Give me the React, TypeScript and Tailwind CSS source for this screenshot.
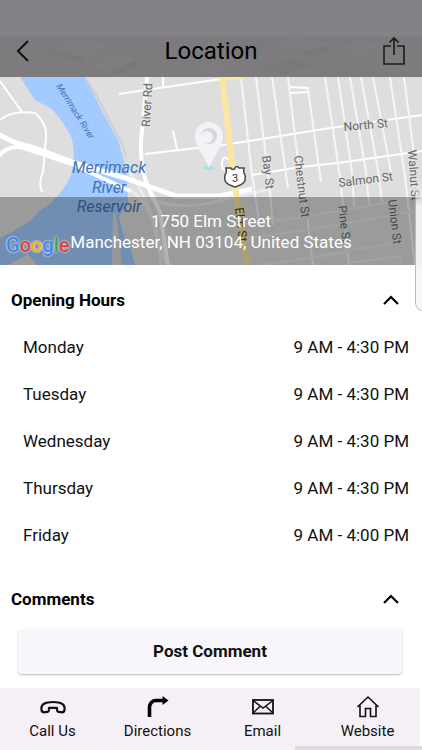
import React from 'react';

const hours = [
  { day: 'Monday', time: '9 AM - 4:30 PM' },
  { day: 'Tuesday', time: '9 AM - 4:30 PM' },
  { day: 'Wednesday', time: '9 AM - 4:30 PM' },
  { day: 'Thursday', time: '9 AM - 4:30 PM' },
  { day: 'Friday', time: '9 AM - 4:00 PM' },
];

function PhoneIcon() {
  return (
    <svg width="28" height="24" viewBox="0 0 28 24" fill="none" stroke="#111" strokeWidth="2.200" strokeLinejoin="round" aria-hidden="true">
      <path d="M2.500 15C1.500 9 6.500 7 14 7s12.500 2 11.500 8c-.3 2-1.500 2.500-3.500 2.200l-2.500-.4c-1.200-.2-1.500-.9-1.500-2v-2h-8v2c0 1.100-.3 1.800-1.500 2l-2.500.4c-2 .3-3.200-.2-3.500-2.200z" />
    </svg>
  );
}

function DirectionsIcon() {
  return (
    <svg width="24" height="24" viewBox="0 0 24 24" aria-hidden="true">
      <path d="M3.500 22V12a6.500 6.500 0 0 1 6.500-6.500h7" fill="none" stroke="#000" strokeWidth="3.600" />
      <path d="M16.500 1v9l6-4.500z" fill="#000" />
    </svg>
  );
}

function MailIcon() {
  return (
    <svg width="24" height="24" viewBox="0 0 24 24" fill="none" stroke="#111" aria-hidden="true">
      <rect x="2" y="5" width="20" height="13.500" strokeWidth="1.800" />
      <path d="M2 5.500l10 7.500 10-7.500M2 18l7.500-7M22 18l-7.500-7" strokeWidth="1.500" />
    </svg>
  );
}

function HomeIcon() {
  return (
    <svg width="24" height="24" viewBox="0 0 24 24" fill="none" stroke="#111" strokeWidth="1.600" aria-hidden="true">
      <path d="M1.500 12L12 2l10.500 10M4 10.500V21.500h5.500v-8h5v8H20V10.500" />
    </svg>
  );
}

const actions = [
  { label: 'Call Us', icon: <PhoneIcon /> },
  { label: 'Directions', icon: <DirectionsIcon /> },
  { label: 'Email', icon: <MailIcon /> },
  { label: 'Website', icon: <HomeIcon /> },
];

function StreetMap() {
  return (
    <svg viewBox="0 0 422 188" preserveAspectRatio="xMidYMid slice" className="block w-full" role="img" aria-label="Map of Manchester">
      <rect width="422" height="188" fill="#dedede" />
      {/* river */}
      <path d="M20 0L35 23L52 32Q66 48 72 62Q76 80 71 98Q66 111 50 127L40 133L30 144L12 155L0 161V188H8L28 177L37 188H135L131 172L124 160L119 140L128 125L127 100L123 80L118 63L102 34L85 0Z" fill="#a3cbff" />
      <path d="M112 188L113 136H116L122 188Z" fill="#dadada" />
      <path d="M85 0L95 16L122 67L126 80" fill="none" stroke="#cfcfcf" strokeWidth="2" />

      {/* highway ramps */}
      <g fill="none" stroke="#ececec" strokeWidth="3">
        <path d="M127 90L140 112L150 133L157 160L161 188" />
        <path d="M128 112Q146 122 154 146L166 188" />
        <path d="M150 122Q175 132 205 127L270 112" />
      </g>

      <g fill="none" stroke="#fff">
        <path d="M-2 57Q14 67 32 70L75 86L125 101L176 119H220L252 112" strokeWidth="5" />
        <path d="M-2 80Q8 67 24 71L72 87L130 114" strokeWidth="4" />
        <path d="M0 43Q12 33 35 36Q47 46 46 60L43 95Q38 105 42 115" strokeWidth="2" />
        <path d="M0 4L22 35" strokeWidth="2" />
        <path d="M147 0L141 65Q140 95 150 114L160 135L168 188" strokeWidth="4" />
        <path d="M422 38L330 51L224 68L205 70L145 77" strokeWidth="2" />
        <path d="M252 98L300 90L338 86L422 74" strokeWidth="2" />
        <path d="M119 17L221 2M163 0V10M173 54L177 72M290 10L308 11V15L290 16" strokeWidth="2" />
        <path d="M230 93Q221 95 222 86T229 83" strokeWidth="2" />
      </g>

      {/* city grid */}
      <g fill="none" stroke="#f6f6f6" strokeWidth="2">
        <path d="M241 0L252 98L259 143M256 0L269 105L273 148M272 0L288 111M288 0L299 92L306 130L313 188M308 12L321 105M325 0L340 100L349 188" />
        <path d="M338 0L352 95L354 129M350 0L366 95L369 127M361 0L378 93L382 125M373 0L391 95M390 0L405 100L415 188M404 0L416 93" />
      </g>
      <path d="M239 163L330 149L422 133M270 145L345 133L397 124M300 182L350 173L405 165M262 188L350 175M350 186L400 179L401 188" fill="none" stroke="#e8e8e8" strokeWidth="2" />

      {/* elm street */}
      <path d="M222 0L234 103L247 188" fill="none" stroke="#fbe6a2" strokeWidth="6" />
      <path d="M221 2L245 0" stroke="#fbe6a2" strokeWidth="4" />
      <path d="M226 91h5q2 3 4 0t4 0h5q-1 4 1 7c2 9-5 10-10 12c-5-2-12-3-10-12q2-3 1-7z" fill="#fff" stroke="#4a4a4a" strokeWidth="1.500" />

      <g fill="#666" stroke="#e4e4e4" strokeWidth="2" paintOrder="stroke" fontFamily="Roboto, sans-serif" fontSize="12">
        <text transform="translate(344 54) rotate(-5)">North St</text>
        <text transform="translate(339 110) rotate(-7)">Salmon St</text>
        <text transform="translate(150 50) rotate(-87)">River Rd</text>
        <text transform="translate(262 79) rotate(83)">Bay St</text>
        <text transform="translate(294 79) rotate(83)">Chestnut St</text>
        <text transform="translate(338 129) rotate(83)">Pine St</text>
        <text transform="translate(388 123) rotate(83)">Union St</text>
        <text transform="translate(408 73) rotate(86)">Walnut St</text>
        <text transform="translate(235 131) rotate(83)" fill="#4a3a1c" stroke="#fbe6a2">Elm St</text>
      </g>
      <text x="235" y="105" textAnchor="middle" fill="#333" fontFamily="Roboto, sans-serif" fontSize="11">3</text>
      <g fill="#4272b8" fontFamily="Roboto, sans-serif" fontStyle="italic">
        <text transform="translate(56 9) rotate(58)" fontSize="9">Merrimack River</text>
        <g fontSize="16" textAnchor="middle">
          <text x="109" y="96">Merrimack</text>
          <text x="109" y="116">River</text>
          <text x="109" y="135">Reservoir</text>
        </g>
      </g>

      {/* pin */}
      <ellipse cx="209" cy="91" rx="6" ry="2" fill="#9be8e8" />
      <path d="M209 91C205 79 195 71 195 59a14 14 0 0 1 28 0C223 71 213 79 209 91z" fill="#f5f2f7" />
      <circle cx="209" cy="59" r="8" fill="#d8d8d8" />
      <circle cx="207" cy="60" r="6" fill="#f5f2f7" />
    </svg>
  );
}

function GoogleLogo() {
  return (
    <span className="flex text-[20px] leading-6 font-medium [text-shadow:0_0_2px_#ddd,0_0_2px_#ddd]">
      <span className="text-[#4285f4]">G</span>
      <span className="text-[#dd4335]">o</span>
      <span className="text-[#f0b410]">o</span>
      <span className="text-[#4285f4]">g</span>
      <span className="text-[#34a853]">l</span>
      <span className="text-[#dd4335]">e</span>
    </span>
  );
}

function SectionHeader({ title }: { title: string }) {
  return (
    <h2>
      <button type="button" className="flex w-full items-center justify-between pr-[22px] pl-[11px] text-[17px] leading-6 font-bold text-black">
        {title}
        <svg width="18" height="12" viewBox="0 0 18 12" fill="none" stroke="#000" strokeWidth="2.200" aria-hidden="true">
          <path d="M2 10l7-7 7 7" />
        </svg>
      </button>
    </h2>
  );
}

export default function App() {
  return (
    <div className="relative flex min-h-screen flex-col overflow-hidden bg-white font-[Roboto,sans-serif] text-[#111]">
      <header className="relative flex items-center justify-between bg-linear-to-b from-[#848287] from-45% to-[#7d7b7d] to-50% px-4 pt-8 pb-2 text-black">
        <svg viewBox="0 0 422 40" preserveAspectRatio="none" className="absolute inset-x-0 bottom-0 h-10 w-full opacity-40" aria-hidden="true">
          <g fill="#858285">
            <path d="M50 12L78 2L110 8L84 20ZM92 28L118 18L138 22L112 34ZM272 6L300 0L330 8L304 14ZM196 32L214 25L232 29L214 38ZM340 10L362 4L384 10L360 18Z" />
          </g>
          <g fill="#787578">
            <path d="M50 12L84 20V26L50 18ZM112 34L138 22V28L114 40ZM304 14L330 8V14L304 20ZM232 10L262 4V14L234 20ZM260 30L290 22L312 28L284 38Z" />
          </g>
        </svg>
        <button type="button" aria-label="Back" className="relative flex h-[37px] w-8 items-center">
          <svg width="14" height="22" viewBox="0 0 14 22" fill="none" stroke="#111" strokeWidth="2">
            <path d="M12 1L2 11l10 10" />
          </svg>
        </button>
        <h1 className="relative text-2xl leading-9">Location</h1>
        <button type="button" aria-label="Share" className="relative flex h-[37px] w-8 items-center justify-end">
          <svg width="24" height="32" viewBox="0 0 24 32" fill="none" stroke="#1c1c1c" strokeWidth="1.600">
            <path d="M9 11H2v18h20V11h-7M12 20V3M7.500 7.500L12 3 16.500 7.500" />
          </svg>
        </button>
      </header>

      <section className="relative">
        <StreetMap />
        <div className="absolute inset-x-0 bottom-0 h-[68px] bg-black/30" />
        <div className="absolute bottom-2 left-1.5">
          <GoogleLogo />
        </div>
        <p className="absolute inset-x-0 bottom-3 text-center text-[17px] leading-[21px] text-white">
          1750 Elm Street
          <br />
          Manchester, NH 03104, United States
        </p>
      </section>

      <main className="grow">
        <section className="pt-[23px]">
          <SectionHeader title="Opening Hours" />
          <dl className="pt-3">
            {hours.map((item) => (
              <div key={item.day} className="flex h-[47px] items-center justify-between pr-[13px] pl-[23px] text-[17px]">
                <dt>{item.day}</dt>
                <dd>{item.time}</dd>
              </div>
            ))}
          </dl>
        </section>

        <section className="pt-7">
          <SectionHeader title="Comments" />
          <div className="pt-[18px] pr-5 pl-[18px]">
            <button type="button" className="h-[45px] w-full rounded-sm bg-[#f8f6fa] text-[17px] font-bold shadow-[0_1px_2px_#0004]">
              Post Comment
            </button>
          </div>
        </section>
      </main>

      <nav className="mr-0.5 grid h-[58px] grid-cols-4 bg-[#f5f0f6]">
        {actions.map((action) => (
          <button key={action.label} type="button" className="flex flex-col items-center pt-[7px] text-[15px] leading-6">
            {action.icon}
            {action.label}
          </button>
        ))}
      </nav>
      <div className="flex h-1 bg-[#f4f4f4]">
        <div className="ml-auto w-[30%] bg-[#dcdcdc]" />
      </div>

      <div className="absolute top-[180px] -right-2 h-[131px] w-[15px] rounded-b-lg border border-t-0 border-[#bbb] bg-[#f6f6f6]/95 mask-t-from-80%" />
    </div>
  );
}
